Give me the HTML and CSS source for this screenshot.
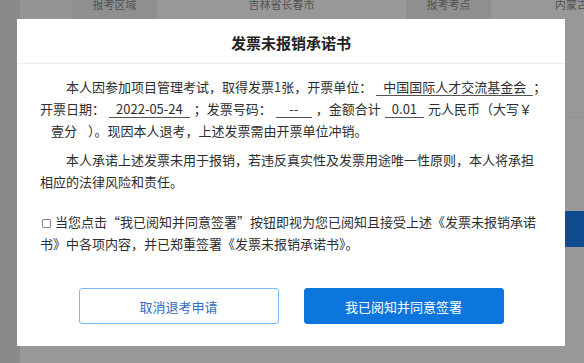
FILE: index.html
```html
<!DOCTYPE html>
<html lang="zh-CN">
<head>
    <meta charset="UTF-8">
    <meta name="viewport" content="width=device-width, initial-scale=1.0">
    <title>退考申请</title>
    <link rel="stylesheet" href="styles.css">
</head>
<body>
    <div class="page">
        <aside class="side"></aside>
        <main class="main">
            <div class="info-row">
                <div class="cell blank"></div>
                <div class="cell th">报考区域</div>
                <div class="cell td">吉林省长春市</div>
                <div class="cell th">报考考点</div>
                <div class="cell td">内蒙古自治区呼和浩特市</div>
            </div>
            <div class="info-line"></div>
            <div class="actions">
                <button type="button" class="btn-refund">申请退考</button>
            </div>
        </main>
    </div>

    <div class="mask"></div>

    <div class="dialog">
        <div class="dialog-head">发票未报销承诺书</div>
        <div class="dialog-body">
            <p class="indent claim">本人因参加项目管理考试，取得发票1张，开票单位：<span class="field last">中国国际人才交流基金会</span>；开票日期：<span class="field">2022-05-24</span>；发票号码：<span class="field short">--</span>，金额合计<span class="field">0.01</span>元人民币（大写￥<span class="field plain">壹分</span>）。现因本人退考，上述发票需由开票单位冲销。</p>
            <p class="indent">本人承诺上述发票未用于报销，若违反真实性及发票用途唯一性原则，本人将承担相应的法律风险和责任。</p>
            <p class="agree"><input type="checkbox" id="agree">当您点击“我已阅知并同意签署”按钮即视为您已阅知且接受上述《发票未报销承诺书》中各项内容，并已郑重签署《发票未报销承诺书》。</p>
        </div>
        <div class="dialog-foot">
            <button type="button" class="btn btn-cancel">取消退考申请</button>
            <button type="button" class="btn btn-ok">我已阅知并同意签署</button>
        </div>
    </div>
</body>
</html>
```

FILE: styles.css
```css
body {
    margin: 0;
    padding: 0;
    font-family: "Noto Sans CJK SC", "Noto Sans", sans-serif;
    background-color: #fff;
    overflow: hidden;
}
.page {
    display: flex;
    height: 100vh;
}
.side {
    width: 20px;
    background-color: #e6e6e6;
}
.main {
    flex: 1;
    min-width: 0;
    overflow: hidden;
    background-color: #fdfdfd;
}
.info-row {
    display: flex;
    height: 20px;
    font-size: 11px;
    line-height: 8px;
    color: #8c8c8c;
    white-space: nowrap;
}
.cell {
    flex-shrink: 0;
    text-align: center;
}
.cell.blank {
    width: 52px;
    background-color: #f8f8f8;
}
.cell.th {
    width: 85px;
    background-color: #eeeeee;
}
.cell.td {
    width: 249px;
    background-color: #fdfdfd;
}
.info-line {
    margin-top: 97px;
    border-top: 1px solid #f0f0f0;
}
.actions {
    display: flex;
    justify-content: flex-end;
    margin-top: 93px;
}
.btn-refund {
    width: 130px;
    height: 36px;
    border: none;
    background-color: #1a7fee;
    color: #fff;
}
.mask {
    position: fixed;
    top: 0;
    left: 0;
    right: 0;
    bottom: 0;
    background-color: rgba(0, 0, 0, 0.4);
}
.dialog {
    position: fixed;
    top: 19px;
    left: 17px;
    width: 548px;
    background-color: #fff;
    color: #2e2e2e;
}
.dialog-head {
    height: 45px;
    padding-top: 3px;
    box-sizing: border-box;
    border-bottom: 1px solid #eee;
    display: flex;
    align-items: center;
    justify-content: center;
    font-size: 15px;
    font-weight: bold;
    color: #222;
}
.dialog-body {
    padding: 12px 27px 0 23px;
    font-size: 13px;
    line-height: 22px;
}
.dialog-body p {
    margin: 0 0 7px;
}
.indent {
    text-indent: 2em;
}
.dialog-body .claim {
    margin-right: -14px;
}
.field {
    display: inline-block;
    text-indent: 0;
    line-height: 17px;
    padding: 0 7px;
    margin: 0 4px;
    border-bottom: 1px solid #555;
    white-space: nowrap;
}
.field.last {
    margin-right: 0;
}
.field.short {
    min-width: 22px;
    text-align: center;
}
.field.plain {
    border-bottom-color: transparent;
}
.dialog-body .agree {
    margin-top: 18px;
}
.agree input {
    appearance: none;
    width: 9px;
    height: 9px;
    margin: 0 4px 0 2px;
    border: 1px solid #888;
    border-radius: 1px;
    vertical-align: -1px;
}
.dialog-foot {
    display: flex;
    justify-content: center;
    gap: 25px;
    padding: 26px 0 22px;
}
.btn {
    width: 200px;
    height: 36px;
    border-radius: 3px;
    font-family: inherit;
    font-size: 13px;
    cursor: pointer;
}
.btn-cancel {
    background-color: #fff;
    border: 1px solid #7ab8f5;
    color: #2f6cbf;
}
.btn-ok {
    background-color: #0c76dd;
    border: 1px solid #0c76dd;
    color: #fff;
}
```
